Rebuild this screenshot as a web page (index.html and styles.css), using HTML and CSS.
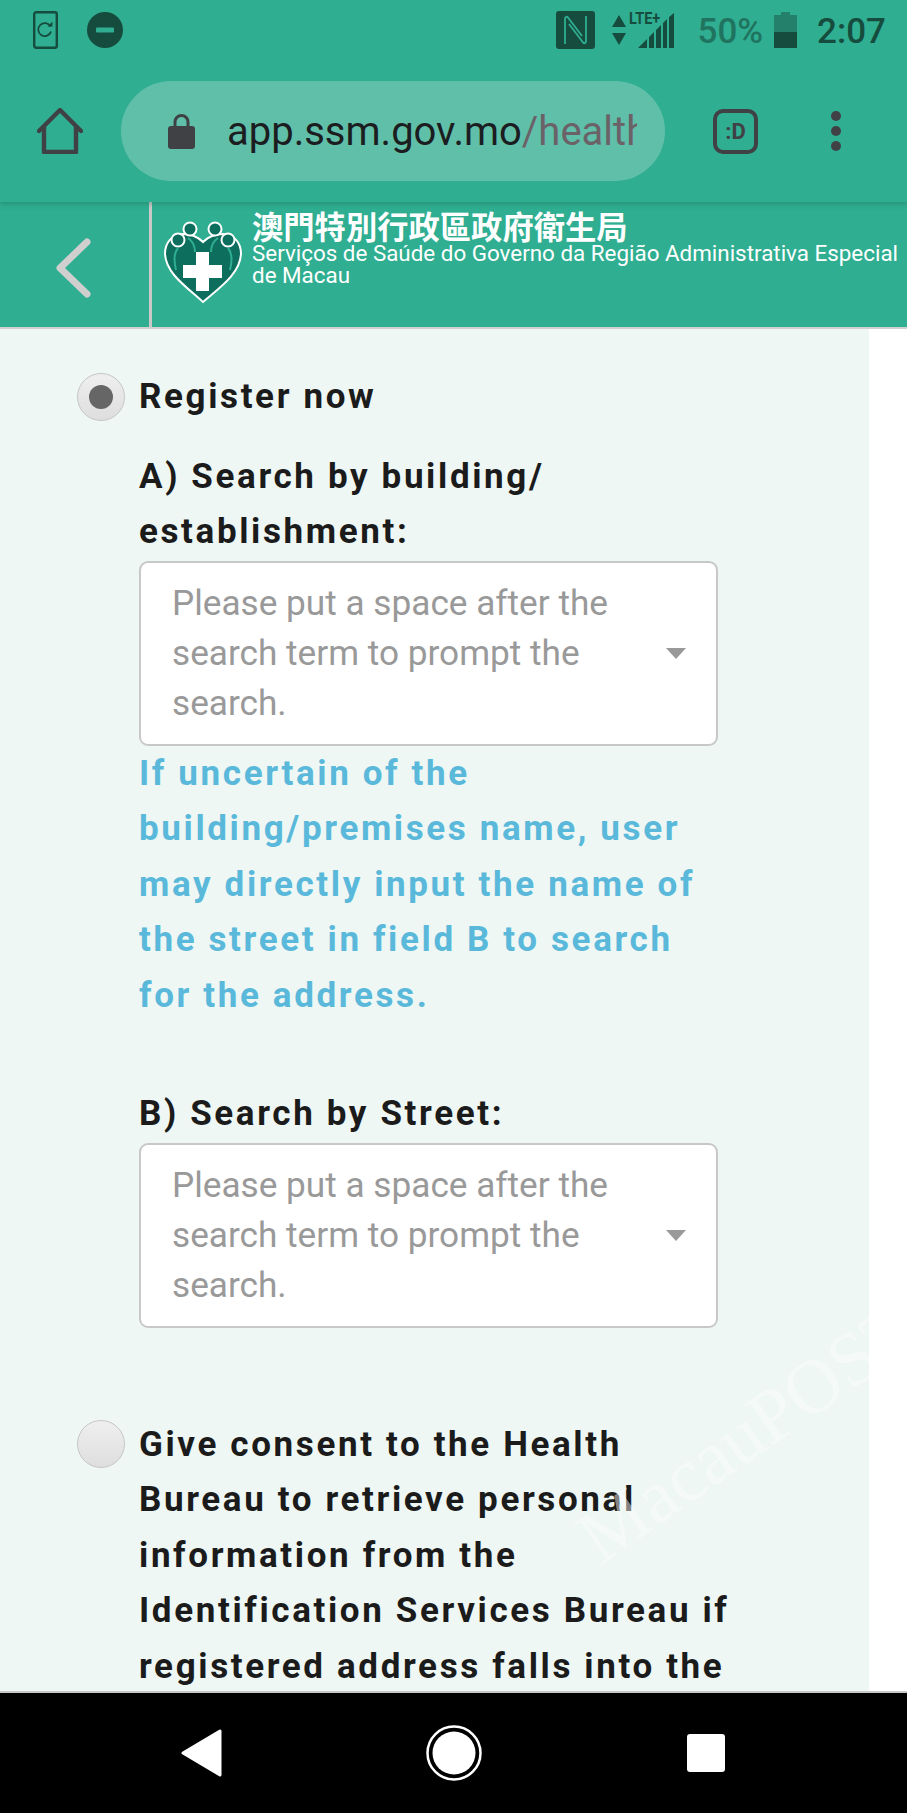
FILE: index.html
```html
<!DOCTYPE html>
<html lang="en">
<head>
<meta charset="utf-8">
<title>Register</title>
<link rel="stylesheet" href="styles.css">
</head>
<body>
<div class="screen">
  <header class="chrome">
    <div class="statusbar">
      <div class="status-left">
        <svg class="ic-rotate" viewBox="0 0 25 38"><rect x="1.2" y="1.2" width="22.6" height="35.6" rx="2" fill="none" stroke="#164c3e" stroke-width="2.4"/><path d="M17.500 15.500a6.500 6.500 0 1 0 .5 5" fill="none" stroke="#164c3e" stroke-width="1.800"/><path d="M14.500 15.500h5v-5z" fill="#164c3e"/></svg>
        <svg class="ic-dnd" viewBox="0 0 36 36"><circle cx="18" cy="18" r="18" fill="#164c3e"/><rect x="9" y="15.500" width="18" height="5" rx="1" fill="#2fae91"/></svg>
      </div>
      <div class="status-right">
        <svg class="ic-nfc" viewBox="0 0 39 38"><rect width="39" height="38" rx="3" fill="#164c3e"/><path d="M9 33V8c0-2 1.500-3 3-1.500L26 25M30 5v25c0 2-1.500 3-3 1.500L13 13" fill="none" stroke="#2fae91" stroke-width="1.800"/></svg>
        <div class="net">
          <svg class="ic-arrows" viewBox="0 0 14 30"><path d="M7 0l7 12H0zM7 30L0 18h14z" fill="#164c3e"/></svg>
          <div class="signal">
            <span class="lte">LTE+</span>
            <svg class="ic-signal" viewBox="0 0 36 36"><path d="M0 35l9-9v9zM11 24l5-5v16h-5zM18 17l5-5v23h-5zM25 10l4-4v29h-4zM31 4l5-4v35h-5z" fill="#164c3e"/></svg>
          </div>
        </div>
        <span class="pct">50%</span>
        <svg class="ic-batt" viewBox="0 0 23 36"><path d="M7 0h9v3h7v17H0V3h7z" fill="#24806a"/><rect y="20" width="23" height="16" fill="#164c3e"/></svg>
        <span class="clock">2:07</span>
      </div>
    </div>
    <div class="toolbar">
      <svg class="ic-home" viewBox="0 0 46 46"><path d="M2 23L23 2l21 21M7 19v25h32V19" fill="none" stroke="#3f4145" stroke-width="4.400" stroke-linecap="round" stroke-linejoin="round"/></svg>
      <div class="pill">
        <svg class="ic-lock" viewBox="0 0 27 35"><path d="M7 14V8a6.500 6.500 0 0 1 13 0v6" fill="none" stroke="#3f4145" stroke-width="3"/><rect y="12" width="27" height="23" rx="3" fill="#3f4145"/></svg>
        <div class="url"><span class="host">app.ssm.gov.mo</span><span class="path">/health</span></div>
      </div>
      <div class="tab-count">:D</div>
      <div class="menu"><i></i><i></i><i></i></div>
    </div>
  </header>

  <div class="subheader">
    <div class="back">
      <svg class="ic-back" viewBox="0 0 36 60"><path d="M32 4L5 30l27 26" fill="none" stroke="#cfcfcf" stroke-width="7" stroke-linecap="round" stroke-linejoin="round"/></svg>
    </div>
    <div class="brand">
      <svg class="logo" viewBox="0 0 78 84">
        <path d="M39 82C24 68 2 54 1 34 1 22 8 15 19 14c9 0 15 3 20 8 5-5 11-8 20-8 11 1 18 8 18 20-1 20-22 34-38 48z" fill="#0d6e5e" stroke="#fff" stroke-width="2"/>
        <g fill="#0d6e5e" stroke="#fff" stroke-width="2"><circle cx="14" cy="20" r="6.500"/><circle cx="26" cy="9" r="6.500"/><circle cx="51" cy="9" r="6.500"/><circle cx="64" cy="20" r="6.500"/></g>
        <path d="M14 28c-5 6-4 14-2 22M64 28c5 6 4 14 2 22M24 18c6 4 7 10 7 14M54 18c-6 4-7 10-7 14" fill="none" stroke="#2fae91" stroke-width="2"/>
        <path d="M32 32h13v13h13v13H45v13H32V58H19V45h13z" fill="#fff"/>
      </svg>
      <div class="brand-text">
        <div class="brand-zh">澳門特別行政區政府衛生局</div>
        <div class="brand-pt">Serviços de Saúde do Governo da Região Administrativa Especial de Macau</div>
      </div>
    </div>
  </div>

  <main class="content">
    <div class="panel">
      <div class="option">
        <span class="radio radio-on"></span>
        <div class="option-title">Register now</div>
      </div>
      <div class="fields">
        <div class="label">A) Search by building/ establishment:</div>
        <div class="select">
          <div class="placeholder">Please put a space after the search term to prompt the search.</div>
          <span class="caret"></span>
        </div>
        <div class="hint">If uncertain of the<br>building/premises name, user<br>may directly input the name of<br>the street in field B to search<br>for the address.</div>
        <div class="label label-b">B) Search by Street:</div>
        <div class="select">
          <div class="placeholder">Please put a space after the search term to prompt the search.</div>
          <span class="caret"></span>
        </div>
      </div>
      <div class="option option-consent">
        <span class="radio radio-off"></span>
        <div class="option-title">Give consent to the Health Bureau to retrieve personal information from the Identification Services Bureau if registered address falls into the</div>
      </div>
      <div class="watermark">MacauPOST</div>
    </div>
  </main>

  <nav class="navbar">
    <svg class="ic-navback" viewBox="0 0 41 48"><path d="M39 2v44L2 24z" fill="#fff" stroke="#fff" stroke-width="3" stroke-linejoin="round"/></svg>
    <svg class="ic-navhome" viewBox="0 0 56 56"><circle cx="28" cy="28" r="26.500" fill="none" stroke="#fff" stroke-width="2.500"/><circle cx="28" cy="28" r="21.500" fill="#fff"/></svg>
    <span class="navsquare"></span>
  </nav>
</div>
</body>
</html>
```
FILE: styles.css
```css
* { box-sizing: border-box; }
html, body { margin: 0; padding: 0; background: #fff; }
body { font-family: Roboto, "Noto Sans CJK TC", sans-serif; }
.screen { width: 907px; height: 1813px; display: flex; flex-direction: column; overflow: hidden; }

.chrome { background: #2fae91; height: 202px; flex: none; box-shadow: 0 2px 5px rgba(20,90,70,.35); position: relative; z-index: 2; }
.statusbar { height: 60px; display: flex; justify-content: space-between; align-items: center; padding: 0 21px 0 33px; }
.status-left { display: flex; align-items: center; gap: 29px; }
.ic-rotate { width: 25px; height: 38px; }
.ic-dnd { width: 36px; height: 36px; }
.status-right { display: flex; align-items: center; }
.ic-nfc { width: 39px; height: 38px; }
.net { display: flex; align-items: center; margin-left: 17px; gap: 4px; }
.ic-arrows { width: 14px; height: 30px; }
.signal { width: 44px; height: 38px; position: relative; }
.ic-signal { width: 36px; height: 36px; position: absolute; right: 0; bottom: 0; }
.lte { position: absolute; left: -1px; top: 0; font: 700 17px/14px "Roboto", sans-serif; color: #164c3e; transform: scaleX(.85); transform-origin: left top; }
.pct { margin: 4px 0 0 24px; font-size: 35px; font-weight: 500; color: #20745f; line-height: 40px; }
.ic-batt { width: 23px; height: 36px; margin-left: 11px; }
.clock { margin: 4px 0 0 20px; font-size: 35px; font-weight: 500; color: #164c3e; line-height: 40px; }

.toolbar { height: 142px; display: flex; align-items: center; padding-left: 37px; }
.ic-home { width: 46px; height: 46px; flex: none; }
.pill { margin-left: 38px; width: 544px; height: 100px; border-radius: 50px; background: #60bfa9; display: flex; align-items: center; padding-left: 47px; flex: none; }
.ic-lock { width: 27px; height: 35px; flex: none; }
.url { margin: 2px 0 0 32px; width: 410px; overflow: hidden; white-space: nowrap; font-size: 40px; line-height: 50px; }
.host { color: #1b1d20; }
.path { color: #6b6268; }
.tab-count { margin-left: 48px; width: 45px; height: 45px; border: 4.500px solid #3f4145; border-radius: 10px; display: flex; align-items: center; justify-content: center; font-size: 22px; font-weight: 700; color: #3f4145; flex: none; }
.menu { margin-left: 73px; display: flex; flex-direction: column; gap: 5px; }
.menu i { display: block; width: 10px; height: 10px; border-radius: 50%; background: #3f4145; }

.subheader { height: 127px; flex: none; background: #2fae91; border-bottom: 2px solid #d0d0d0; display: flex; }
.back { width: 152px; flex: none; border-right: 3px solid #cdc8c8; display: flex; align-items: center; padding: 6px 0 0 55px; }
.ic-back { width: 36px; height: 60px; }
.brand { display: flex; flex: 1; align-items: flex-start; padding: 18px 0 0 12px; min-width: 0; }
.logo { width: 78px; height: 84px; flex: none; }
.brand-text { margin-left: 10px; margin-top: -12px; color: #fff; min-width: 0; }
.brand-zh { font-size: 31.300px; line-height: 36px; font-weight: 700; font-family: "Noto Sans CJK TC", sans-serif; }
.brand-pt { font-size: 22.400px; line-height: 22px; margin-top: -2px; }

.content { flex: 1; min-height: 0; background: #fff; overflow: hidden; }
.panel { width: 869px; height: 100%; background: #eef7f4; padding-top: 40px; position: relative; overflow: hidden; color: #1b1b1b; }
.option { display: flex; align-items: flex-start; padding-left: 77px; }
.radio { width: 48px; height: 48px; border-radius: 50%; flex: none; background: linear-gradient(#efefef, #dedede); border: 1px solid #c6c6c6; margin-right: 14px; position: relative; }
.radio-on { margin-top: 4px; }
.radio-off { margin-top: 3px; }
.radio-on::after { content: ""; position: absolute; left: 11px; top: 11px; width: 24px; height: 24px; border-radius: 50%; background: #666; }
.option-title, .label, .hint { font-size: 35px; font-weight: 700; line-height: 55.500px; letter-spacing: 2.620px; }
.option-title { width: 610px; }
.fields { padding: 24px 0 0 139px; }
.label { width: 600px; }
.label-b { margin-top: 63px; }
.select { width: 579px; height: 185px; background: #fff; border: 2px solid #c8c8c8; border-radius: 9px; display: flex; align-items: center; padding: 0 30px 0 31px; margin-top: 1px; }
.placeholder { flex: 1; min-width: 0; max-width: 490px; font-size: 35.200px; line-height: 50px; color: #999; }
.caret { margin-left: auto; width: 0; height: 0; border-left: 10px solid transparent; border-right: 10px solid transparent; border-top: 11px solid #999; }
.hint { color: #5ab9da; }
.option-consent { margin-top: 89px; }
.watermark { position: absolute; left: 609px; top: 1168px; font-family: "Liberation Serif", serif; font-size: 76px; line-height: 80px; color: #fff; opacity: .45; transform: rotate(-35deg); transform-origin: left bottom; white-space: nowrap; pointer-events: none; }

.navbar { height: 122px; flex: none; background: #000; border-top: 2px solid #c8c8c8; display: grid; grid-template-columns: repeat(3, 252px); justify-content: center; justify-items: center; align-items: center; }
.ic-navback { width: 41px; height: 48px; }
.ic-navhome { width: 56px; height: 56px; }
.navsquare { width: 38px; height: 38px; border-radius: 3px; background: #fff; }
```
